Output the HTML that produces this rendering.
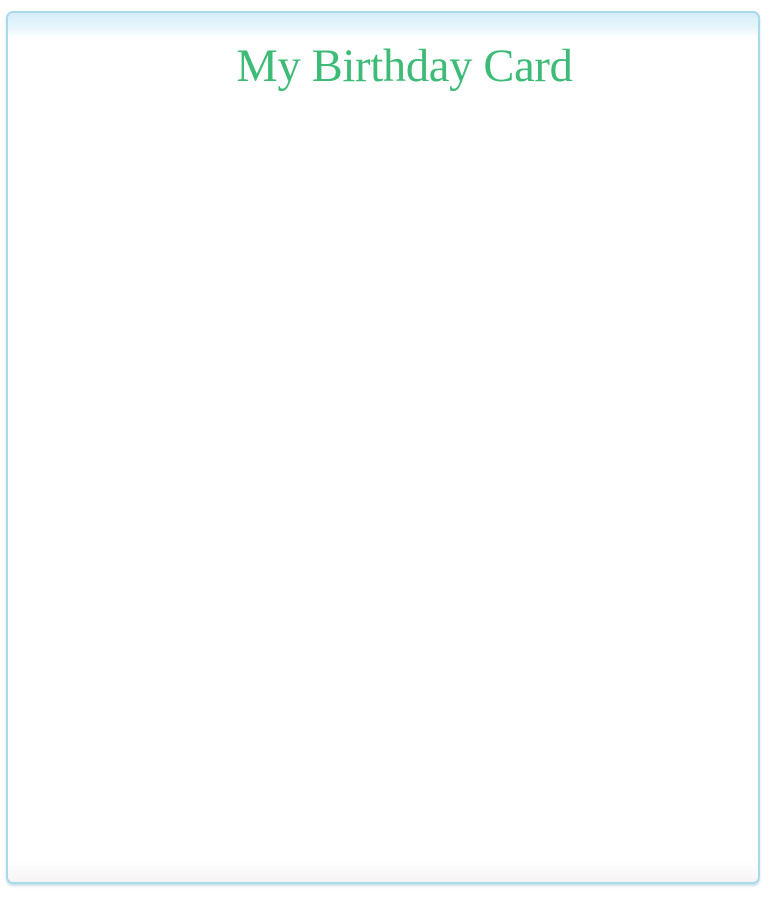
<!DOCTYPE html>
<html><head><style>
html,body{margin:0;padding:0;background:#fff;width:770px;height:900px;overflow:hidden}
.card{position:absolute;left:6px;top:11px;width:750px;height:869px;border:2px solid #a9d9ea;border-radius:7px;background:linear-gradient(#d6eef8 0px,#e6f5fb 14px,#f7fcfe 22px,#fff 25px);box-shadow:0 2px 2px rgba(150,190,210,.5)}
.card:after{content:"";position:absolute;left:0;right:0;bottom:0;height:20px;background:linear-gradient(rgba(255,255,255,0),#f6f3f5);border-radius:0 0 6px 6px}
h1{position:absolute;left:0;width:770px;top:40px;margin:0;text-align:center;padding-left:39px;box-sizing:border-box;font-family:"Liberation Serif",serif;font-weight:normal;font-size:46.5px;color:#3dbb77;letter-spacing:-0.3px}
</style></head><body>
<div class="card"></div>
<h1>My Birthday Card</h1>
</body></html>
